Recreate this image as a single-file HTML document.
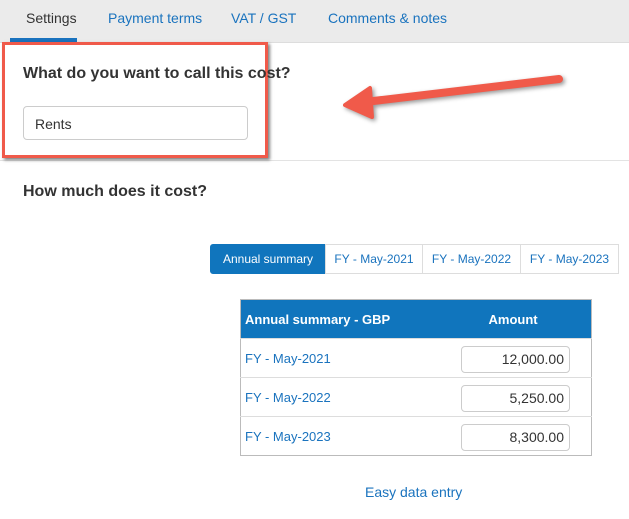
<!DOCTYPE html>
<html><head><style>
*{box-sizing:border-box;margin:0;padding:0}
body{width:629px;height:519px;background:#fff;font-family:"Liberation Sans",Arial,sans-serif;position:relative;overflow:hidden}
.tabs{position:absolute;left:0;top:0;width:629px;height:43px;background:#ebebeb;border-bottom:1px solid #ddd}
.tab{position:absolute;top:10px;font-size:14px;color:#1a73be}
.ul{position:absolute;left:10px;top:38px;width:67px;height:4px;background:#1a73be}
.box{position:absolute;left:2px;top:42px;width:266px;height:116px;border:3px solid #f05a4a;box-shadow:2px 2px 3px rgba(0,0,0,.5)}
h2{position:absolute;font-size:16px;font-weight:bold;color:#333}
.inp{position:absolute;border:1px solid #ccc;border-radius:4px;background:#fff;font-size:14px;color:#333}
.sep{position:absolute;left:0;top:160px;width:629px;height:1px;background:#e3e3e3}
.seg{position:absolute;top:244px;height:30px;border:1px solid #ddd;font-size:12px;color:#1a73be;text-align:center;line-height:28px}
table{position:absolute;left:240px;top:299px;width:351px;border-collapse:collapse;border:1px solid #bbb;font-size:13px;table-layout:fixed}
th{background:#1075bd;color:#fff;height:39px;text-align:left;padding-left:4px;font-size:13px}
td{height:39px;border-top:1px solid #ddd;color:#1a73be;padding-left:4px;position:relative}
.num{position:absolute;right:21px;top:7px;width:109px;height:27px;border:1px solid #ccc;border-radius:4px;text-align:right;padding-right:5px;line-height:25px;color:#333;font-size:14px}
</style></head><body>
<div class="tabs">
<span class="tab" style="left:26px;color:#333">Settings</span>
<span class="tab" style="left:108px">Payment terms</span>
<span class="tab" style="left:231px">VAT / GST</span>
<span class="tab" style="left:328px">Comments &amp; notes</span>
<div class="ul"></div></div>
<div class="sep"></div>
<div class="box"></div>
<h2 style="left:23px;top:65px">What do you want to call this cost?</h2>
<div class="inp" style="left:23px;top:106px;width:225px;height:34px;padding:9px 0 0 11px">Rents</div>
<svg style="position:absolute;left:0;top:0" width="629" height="200"><g filter="drop-shadow(2px 2px 2px rgba(0,0,0,.4))"><line x1="559" y1="79" x2="365" y2="102" stroke="#f05a4a" stroke-width="8" stroke-linecap="round"/><path d="M345 105 L370 88 L372 117 Z" fill="#f05a4a" stroke="#f05a4a" stroke-width="4" stroke-linejoin="round"/></g></svg>
<h2 style="left:23px;top:183px">How much does it cost?</h2>
<div class="seg" style="left:210px;width:116px;background:#1075bd;color:#fff;border-color:#1075bd;border-radius:3px 0 0 3px">Annual summary</div>
<div class="seg" style="left:325px;width:98px">FY - May-2021</div>
<div class="seg" style="left:422px;width:99px">FY - May-2022</div>
<div class="seg" style="left:520px;width:99px">FY - May-2023</div>
<table>
<colgroup><col style="width:200px"><col style="width:151px"></colgroup>
<tr><th>Annual summary - GBP</th><th style="padding-left:48px">Amount</th></tr>
<tr><td colspan="2">FY - May-2021<div class="num">12,000.00</div></td></tr>
<tr><td colspan="2">FY - May-2022<div class="num">5,250.00</div></td></tr>
<tr><td colspan="2">FY - May-2023<div class="num">8,300.00</div></td></tr>
</table>
<div style="position:absolute;left:365px;top:484px;font-size:14px;color:#1a73be">Easy data entry</div>
</body></html>
